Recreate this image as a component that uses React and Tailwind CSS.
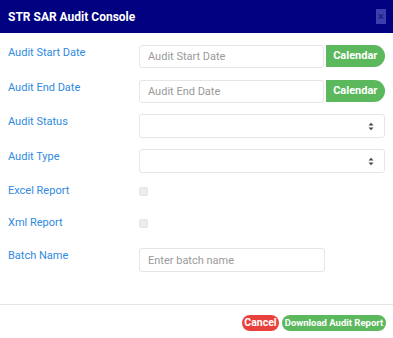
import React from 'react';

function Label({ children }) {
  return <div className="w-[131px] shrink-0 text-[11px] leading-4 text-[#2f8ae0]">{children}</div>;
}

function TextInput({ placeholder, className = '' }) {
  return (
    <input
      type="text"
      placeholder={placeholder}
      className={`h-[23px] rounded-[3px] border border-[#e6e6e6] bg-white px-[8px] text-[11px] text-[#555] placeholder:text-[#9a9a9a] outline-none ${className}`}
    />
  );
}

function SelectBox() {
  return (
    <div className="flex h-[24px] w-[247px] items-center justify-end rounded-[3px] border border-[#e6e6e6] bg-white pr-[10px]">
      <svg width="6" height="9" viewBox="0 0 6 9">
        <path d="M0.5 3.5 L3 0.8 L5.5 3.5 Z" fill="#444" />
        <path d="M0.5 5.5 L3 8.2 L5.5 5.5 Z" fill="#444" />
      </svg>
    </div>
  );
}

function CalendarButton() {
  return (
    <button className="ml-[2px] h-[22px] w-[60px] rounded-l-[4px] rounded-r-full bg-[#5cb85c] text-[11px] font-bold text-white">
      Calendar
    </button>
  );
}

function Checkbox() {
  return <div className="mt-[4px] h-[9px] w-[9px] rounded-[2px] border border-[#e4e4e4] bg-[#ededed]" />;
}

export default function App() {
  return (
    <div className="flex h-[338px] w-[393px] flex-col bg-white" style={{ fontFamily: 'Roboto, "Liberation Sans", sans-serif' }}>
      <div className="flex h-[33px] shrink-0 items-center justify-between bg-[#000080] pl-[8px] pr-[7px]">
        <span className="text-[12px] font-bold text-white">STR SAR Audit Console</span>
        <button className="flex h-[15px] w-[10px] items-center justify-center bg-[#3d3db0] text-[11px] leading-none text-[#14146e]">
          ×
        </button>
      </div>

      <div className="flex flex-col px-[8px] pt-[12px]">
        <div className="mb-[12px] flex items-start">
          <Label>Audit Start Date</Label>
          <TextInput placeholder="Audit Start Date" className="w-[186px]" />
          <CalendarButton />
        </div>
        <div className="mb-[11px] flex items-start">
          <Label>Audit End Date</Label>
          <TextInput placeholder="Audit End Date" className="w-[186px]" />
          <CalendarButton />
        </div>
        <div className="mb-[11px] flex items-start">
          <Label>Audit Status</Label>
          <SelectBox />
        </div>
        <div className="mb-[10px] flex items-start">
          <Label>Audit Type</Label>
          <SelectBox />
        </div>
        <div className="mb-[16px] flex items-start">
          <Label>Excel Report</Label>
          <Checkbox />
        </div>
        <div className="mb-[17px] flex items-start">
          <Label>Xml Report</Label>
          <Checkbox />
        </div>
        <div className="flex items-start">
          <Label>Batch Name</Label>
          <TextInput placeholder="Enter batch name" className="h-[24px] w-[186px]" />
        </div>
      </div>

      <div className="mt-[32px] border-t border-[#e5e5e5]" />
      <div className="flex justify-end gap-[3px] pr-[7px] pt-[10px]">
        <button className="h-[16px] w-[37px] rounded-full bg-[#e8413c] text-[10.5px] font-bold text-white">Cancel</button>
        <button className="h-[16px] w-[104px] rounded-full bg-[#5cb85c] text-[9.5px] font-bold text-white">Download Audit Report</button>
      </div>
    </div>
  );
}
